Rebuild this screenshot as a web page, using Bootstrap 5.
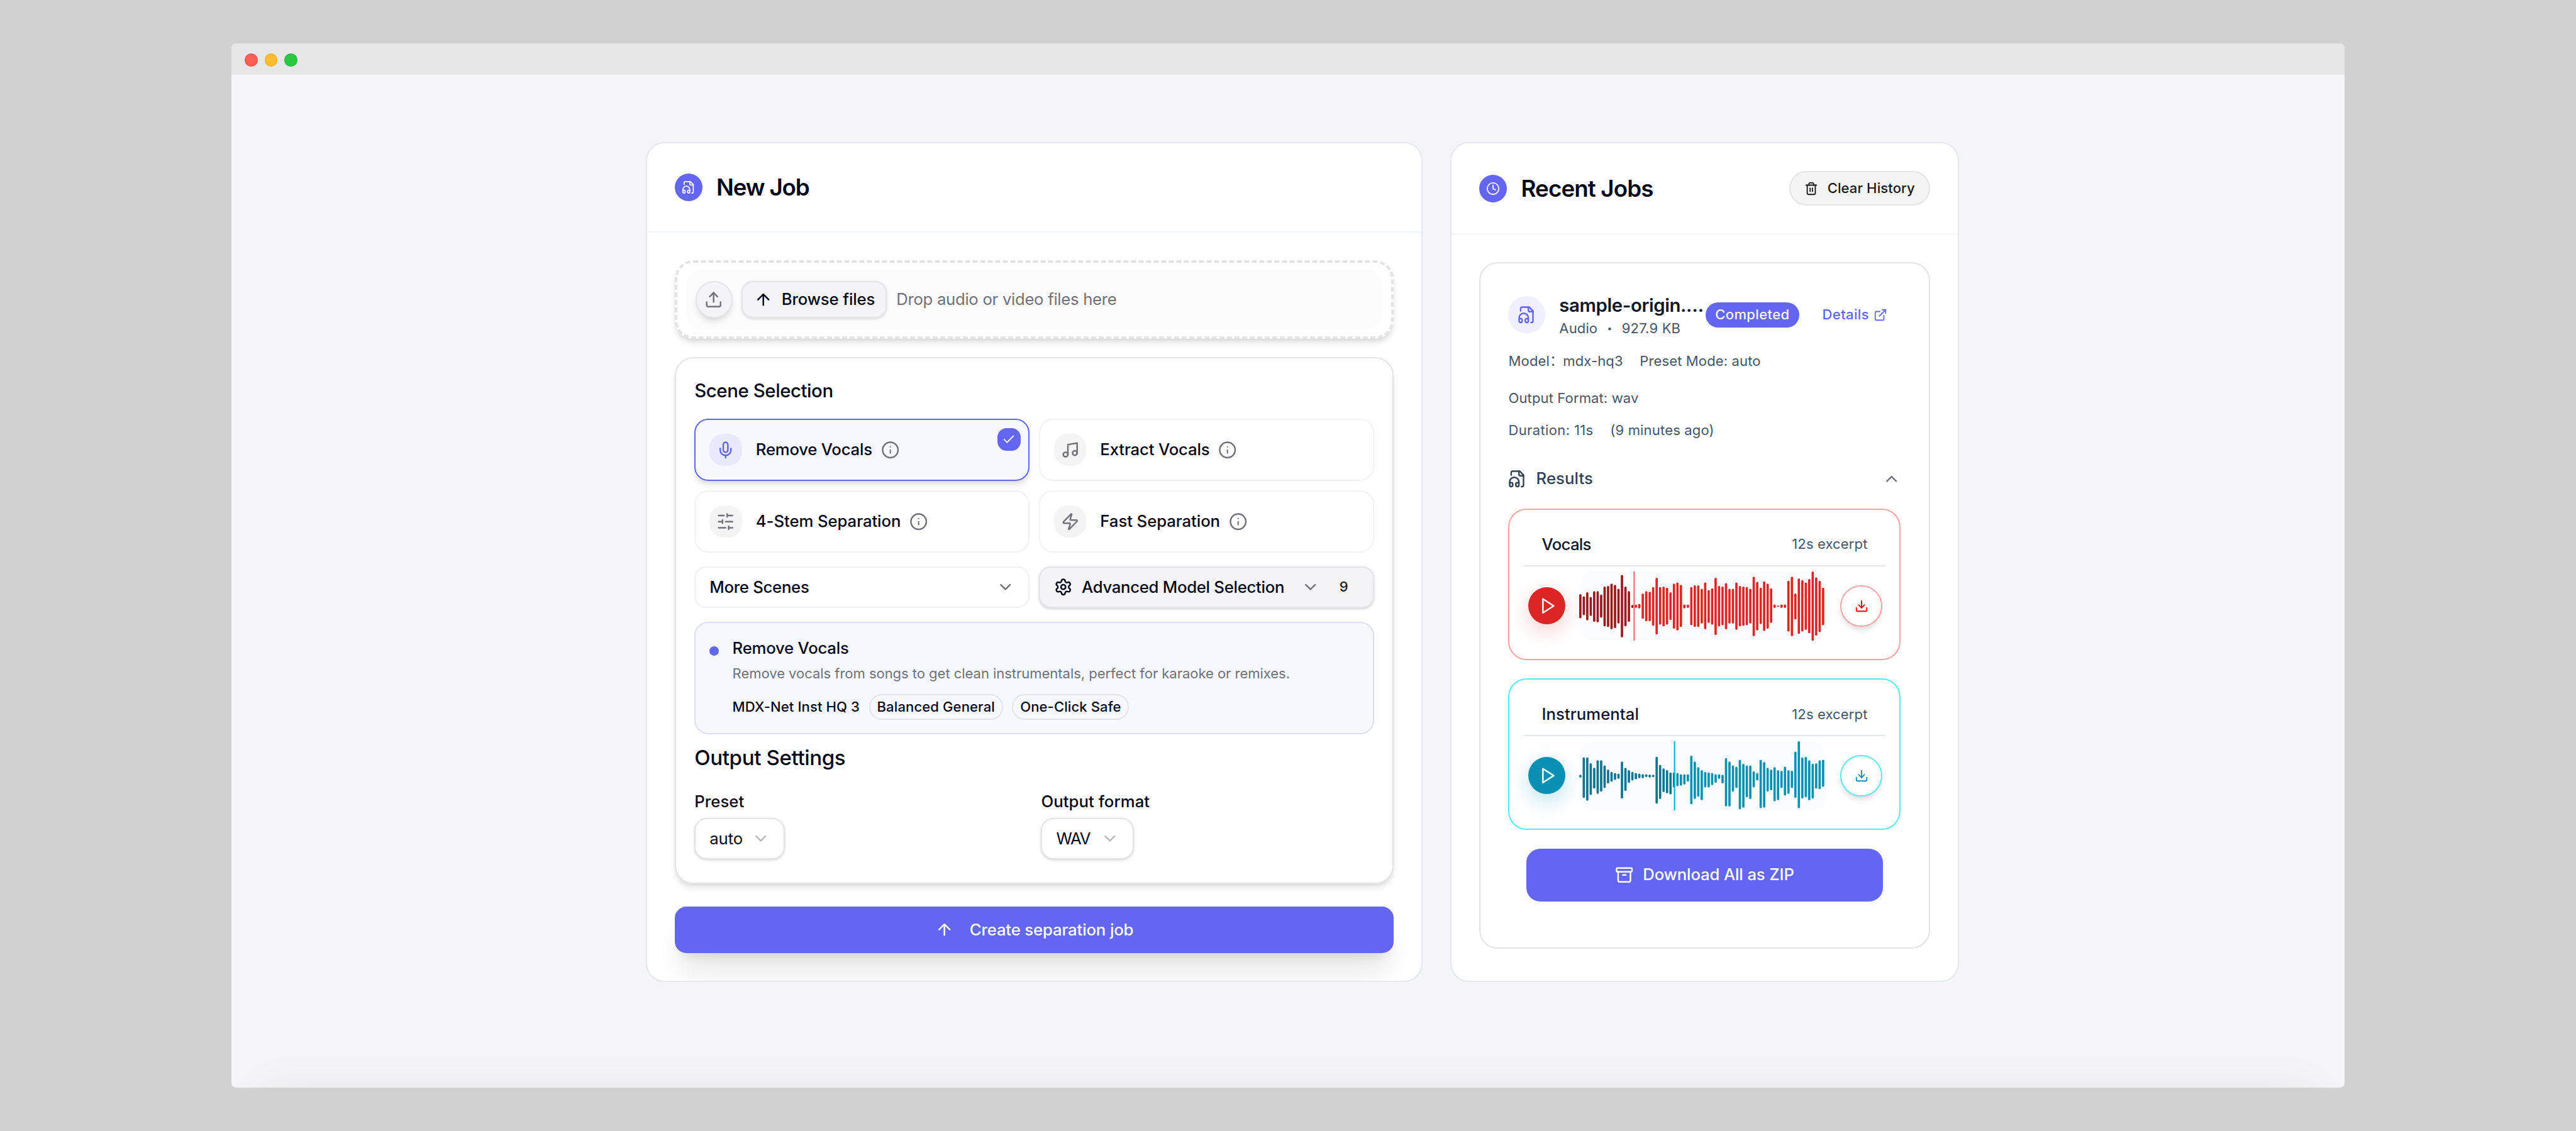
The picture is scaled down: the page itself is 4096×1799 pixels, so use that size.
<!DOCTYPE html>
<html lang="en">
<head>
<meta charset="utf-8">
<meta name="viewport" content="width=device-width, initial-scale=1">
<title>New Job</title>
<link href="https://cdn.jsdelivr.net/npm/bootstrap@5.3.0/dist/css/bootstrap.min.css" rel="stylesheet">
<style>
:root{--u:.91921px;--brand:#6366f1;--ink:#020617;--line:#e4e4e7;--muted:#71717a;--slate:#475569;--shadow-md:0 calc(8*var(--u)) calc(12*var(--u)) calc(-2*var(--u)) rgba(0,0,0,.1),0 calc(4*var(--u)) calc(8*var(--u)) calc(-4*var(--u)) rgba(0,0,0,.1)}
html{font-size:calc(32*var(--u))}
body{margin:0;background:#d1d1d1;color:var(--ink);font-family:Inter,"Noto Sans CJK SC",sans-serif;overflow:hidden;padding:calc(75*var(--u)) 0 0 calc(400*var(--u))}
svg.ico{fill:none;stroke:currentColor;stroke-width:2;stroke-linecap:round;stroke-linejoin:round;flex:none;width:calc(32*var(--u));height:calc(32*var(--u))}
svg.ico.s24{width:calc(24*var(--u));height:calc(24*var(--u))}
.t24{font-size:calc(24*var(--u));line-height:calc(32*var(--u));letter-spacing:.005em}
.t28{font-size:calc(28*var(--u));line-height:calc(40*var(--u));letter-spacing:-.006em}
.t32{font-size:calc(32*var(--u));line-height:calc(48*var(--u));letter-spacing:-.0145em}
.t36{font-size:calc(36*var(--u));line-height:calc(48*var(--u));letter-spacing:-.0119em}
.t40{font-size:calc(40*var(--u));line-height:calc(56*var(--u));letter-spacing:-.0245em}
.w5{font-weight:470}.w6{font-weight:570}
.ls-n32{letter-spacing:-.032em}.ls-n26{letter-spacing:-.0264em}.ls-n12{letter-spacing:-.0115em}.ls-n9{letter-spacing:-.009em}.ls-n3{letter-spacing:-.003em}
.ls-n1{letter-spacing:-.0022em}.ls-p2{letter-spacing:.002em}.ls-p10{letter-spacing:.007em}.ls-p16{letter-spacing:.016em}.ls-n50{letter-spacing:-.0497em}
.muted{color:var(--muted)}.slate{color:var(--slate)}.brand{color:var(--brand)}

.window{width:calc(3656*var(--u));height:calc(1807*var(--u));background:#f5f5f8;border-radius:calc(8*var(--u));overflow:hidden;position:relative}
.window::after{content:"";position:absolute;left:calc(50*var(--u));right:calc(50*var(--u));bottom:calc(-60*var(--u));height:calc(60*var(--u));box-shadow:0 0 calc(70*var(--u)) rgba(0,0,0,.065)}
.titlebar{height:calc(55*var(--u));background:#e7e7e7;padding:calc(3*var(--u)) 0 0 calc(23.5*var(--u));gap:calc(12*var(--u))}
.titlebar i{width:calc(22.4*var(--u));height:calc(22.4*var(--u));border-radius:50%;border:1px solid rgba(0,0,0,.08)}
.lt-r{background:#ff5f57}.lt-y{background:#febc2e}.lt-g{background:#28c840}

.board{padding:calc(116*var(--u)) 0 0 calc(717*var(--u));gap:calc(48*var(--u))}
.pane{border:2px solid #e2e8f0;border-radius:calc(32*var(--u));height:calc(1453*var(--u));background:#fff;overflow:hidden;flex:none;color:inherit}
.pane-job{width:calc(1344*var(--u))}.pane-recent{width:calc(879.5*var(--u))}
.pane>.card-header{background:#fff;border-bottom:2px solid #f1f5f9;padding:0 calc(48*var(--u));height:calc(154*var(--u));gap:calc(24*var(--u));flex:none}
.pane-recent>.card-header{height:calc(158*var(--u))}
.pane>.card-body{padding:calc(48*var(--u))}
.disc{width:calc(48*var(--u));height:calc(48*var(--u));background:var(--brand);color:#fff;border-radius:50%;flex:none}

.drop{height:calc(136*var(--u));border:4px dashed var(--line);border-radius:calc(32*var(--u));padding:calc(12*var(--u)) calc(16*var(--u));box-shadow:var(--shadow-md);background:#fff;margin-bottom:calc(32*var(--u))}
.drop-in{background:#fcfcfc;border-radius:calc(24*var(--u));padding:0 calc(15.5*var(--u));gap:calc(16*var(--u))}
.up{width:calc(64*var(--u));height:calc(64*var(--u));border:2px solid var(--line);border-radius:50%;background:#f4f4f7;color:var(--muted);box-shadow:var(--shadow-md);flex:none}
.btn{--bs-btn-border-width:0;padding:0;color:inherit}
.btn.browse{height:calc(64*var(--u));width:calc(251.5*var(--u));border:2px solid var(--line);border-radius:calc(20*var(--u));background:#f4f4f7;box-shadow:0 calc(2*var(--u)) calc(5*var(--u)) rgba(0,0,0,.12)}
.lift{box-shadow:0 calc(2*var(--u)) calc(6*var(--u)) rgba(0,0,0,.1),0 calc(2*var(--u)) calc(4*var(--u)) calc(-2*var(--u)) rgba(0,0,0,.1)}

.panel{height:calc(911*var(--u));border:2px solid var(--line);border-radius:calc(32*var(--u));padding:calc(32*var(--u));box-shadow:var(--shadow-md);margin-bottom:calc(40*var(--u))}
.panel-title{margin:0 0 calc(24*var(--u))}
.duo{display:grid;grid-template-columns:1fr 1fr;gap:calc(16*var(--u))}
.scene{height:calc(108*var(--u));border:2px solid #f2f2f3;border-radius:calc(24*var(--u));padding:0 calc(24*var(--u));position:relative}
.scene.on{border-color:var(--brand);background:#f7f8fe;box-shadow:var(--shadow-md)}
.tile{width:calc(56*var(--u));height:calc(56*var(--u));border-radius:calc(24*var(--u));background:#f4f4f4;color:var(--muted);margin-right:calc(24*var(--u));flex:none}
.on .tile{background:#e9e9fc;color:var(--brand)}
.scene .info{color:var(--muted);margin-left:calc(15*var(--u))}
.tick{position:absolute;top:calc(14*var(--u));right:calc(13.5*var(--u));width:calc(40*var(--u));height:calc(40*var(--u));border-radius:calc(16*var(--u));background:var(--brand);color:#fff}
.pick-row{margin:calc(24*var(--u)) 0}
.pick{height:calc(72*var(--u));border:2px solid #f0f0f1;border-radius:calc(20*var(--u));padding:0 calc(24*var(--u))}
.pick.adv{background:#f4f4f7;border-color:var(--line);gap:calc(16*var(--u))}
.count{width:calc(52*var(--u));height:calc(44*var(--u));border-radius:calc(22*var(--u));background:#f4f4f4;color:#18181b}
.note{height:calc(195*var(--u));border:2px solid #dcdcfb;background:#f7f8fe;border-radius:calc(24*var(--u));padding:calc(24*var(--u));gap:calc(23.5*var(--u))}
.note-desc{margin:calc(8*var(--u)) 0 calc(19*var(--u));white-space:nowrap}
.dot{width:calc(16*var(--u));height:calc(16*var(--u));border-radius:50%;background:var(--brand);margin-top:calc(16*var(--u));flex:none}
.chip{height:calc(44*var(--u));border:2px solid var(--line);border-radius:calc(22*var(--u));padding:0 calc(11.7*var(--u))}
.out-title{margin:calc(16*var(--u)) 0 calc(32*var(--u))}
.out-grid{gap:calc(24*var(--u))}
.out-label{margin-bottom:calc(8*var(--u))}
.opt{height:calc(72*var(--u));border:2px solid var(--line);border-radius:calc(22*var(--u));padding:0 calc(24*var(--u));gap:calc(15*var(--u));background:#fff}
.opt-wide{gap:calc(18*var(--u))}
.opt svg{color:var(--muted);opacity:.5}
.btn.cta{height:calc(80*var(--u));background:var(--brand);color:#fff;border-radius:calc(20*var(--u));gap:calc(28*var(--u));box-shadow:0 calc(40*var(--u)) calc(50*var(--u)) calc(-10*var(--u)) rgba(0,0,0,.1),0 calc(16*var(--u)) calc(20*var(--u)) calc(-12*var(--u)) rgba(0,0,0,.1)}

.btn.clear{width:calc(243*var(--u));height:calc(60*var(--u));border:2px solid var(--line);border-radius:calc(30*var(--u));background:#f4f4f4;color:#18181b;gap:calc(16*var(--u))}
.job{height:calc(1188*var(--u));border:2px solid var(--line);border-radius:calc(32*var(--u));padding:calc(48*var(--u))}
.job-top{height:calc(81*var(--u));margin-bottom:calc(24*var(--u))}
.avatar{width:calc(64*var(--u));height:calc(64*var(--u));border-radius:50%;background:#efeffd;color:var(--brand);margin-right:calc(24*var(--u));flex:none}
.fname{width:calc(253*var(--u));color:#0f172a;white-space:nowrap;flex:none}
.state{width:calc(162*var(--u));height:calc(44*var(--u));border-radius:calc(22*var(--u));background:var(--brand);color:#fafafa;margin-right:calc(40*var(--u));flex:none}
.details{gap:calc(8*var(--u))}
.bull{font-size:calc(15*var(--u));width:calc(10*var(--u));text-align:center}
.colon{display:inline-block;width:calc(23*var(--u));line-height:1;vertical-align:calc(2.5*var(--u));font-family:"Noto Sans CJK SC",sans-serif}
.facts{gap:calc(29*var(--u));height:calc(32*var(--u));align-items:flex-end;white-space:nowrap}
.row-out{margin:calc(32*var(--u)) 0 calc(24*var(--u))}
.results{height:calc(48*var(--u));margin:calc(43*var(--u)) 0 calc(28*var(--u));color:#334155;gap:calc(16*var(--u))}
.stem{height:calc(262*var(--u));border:2px solid;border-radius:calc(32*var(--u));padding:calc(24*var(--u)) calc(24*var(--u)) 0;margin-bottom:calc(32*var(--u))}
.stem-head{height:calc(74*var(--u));border-bottom:2px solid #e2e8f0;padding:0 calc(31.5*var(--u));margin-bottom:calc(8*var(--u));color:#0f172a}
.stem-row{padding:0 calc(8*var(--u));gap:calc(24*var(--u))}
.play{width:calc(64*var(--u));height:calc(64*var(--u));border-radius:50%;color:#fff;padding-left:calc(4*var(--u));flex:none}
.save{width:calc(72*var(--u));height:calc(72*var(--u));border:2px solid;border-radius:50%;background:#fff;flex:none;box-shadow:var(--shadow-md)}
.wave{width:calc(428.3*var(--u));height:calc(120*var(--u));border-radius:calc(24*var(--u));background:#fbfcfe;flex:none}
.wave svg{width:calc(428*var(--u));height:calc(120*var(--u));display:block}
.red,.red .save{border-color:#ffa2a2}.red .play{background:#dc2626;box-shadow:0 calc(12*var(--u)) calc(36*var(--u)) rgba(220,38,38,.22)}.red .save{color:#e7000b}
.cyan,.cyan .save{border-color:#53eafd}.cyan .play{background:#0891b2;box-shadow:0 calc(12*var(--u)) calc(36*var(--u)) rgba(8,145,178,.25)}.cyan .save{color:#0891b2}
.btn.zip{width:calc(616*var(--u));height:calc(92*var(--u));background:var(--brand);color:#fff;border-radius:calc(24*var(--u));gap:calc(16*var(--u));margin:0 auto}
</style>
<script src="https://cdn.jsdelivr.net/npm/bootstrap@5.3.0/dist/js/bootstrap.bundle.min.js"></script>
</head>
<body>
<svg width="0" height="0" class="d-none">
<symbol id="fileaudio" viewBox="0 0 24 24"><path d="M17.5 22h.5a2 2 0 0 0 2-2V7l-5-5H6a2 2 0 0 0-2 2v3"/><path d="M14 2v4a2 2 0 0 0 2 2h4"/><path d="M2 19a2 2 0 1 1 4 0v1a2 2 0 1 1-4 0v-4a6 6 0 0 1 12 0v4a2 2 0 1 1-4 0v-1a2 2 0 1 1 4 0"/></symbol>
<symbol id="upload" viewBox="0 0 24 24"><path d="M21 15v4a2 2 0 0 1-2 2H5a2 2 0 0 1-2-2v-4"/><path d="m17 8-5-5-5 5"/><path d="M12 3v12"/></symbol>
<symbol id="download" viewBox="0 0 24 24"><path d="M21 15v4a2 2 0 0 1-2 2H5a2 2 0 0 1-2-2v-4"/><path d="m7 10 5 5 5-5"/><path d="M12 15V3"/></symbol>
<symbol id="arrowup" viewBox="0 0 24 24"><path d="m5 12 7-7 7 7"/><path d="M12 19V5"/></symbol>
<symbol id="mic" viewBox="0 0 24 24"><path d="M12 2a3 3 0 0 0-3 3v7a3 3 0 0 0 6 0V5a3 3 0 0 0-3-3Z"/><path d="M19 10v2a7 7 0 0 1-14 0v-2"/><path d="M12 19v3"/></symbol>
<symbol id="info" viewBox="0 0 24 24"><circle cx="12" cy="12" r="10"/><path d="M12 16v-4" stroke-width="1.7"/><path d="M12 8h.01" stroke-width="1.9"/></symbol>
<symbol id="check" viewBox="0 0 24 24"><path d="M20 6 9 17l-5-5"/></symbol>
<symbol id="music" viewBox="0 0 24 24"><path d="M9 18V5l12-2v13"/><circle cx="6" cy="18" r="3"/><circle cx="18" cy="16" r="3"/></symbol>
<symbol id="sliders" viewBox="0 0 24 24"><path d="M21 4h-7M10 4H3M21 12h-9M8 12H3M21 20h-5M12 20H3M14 2v4M8 10v4M16 18v4"/></symbol>
<symbol id="zap" viewBox="0 0 24 24"><path d="M4 14a1 1 0 0 1-.78-1.63l9.9-10.2a.5.5 0 0 1 .86.46l-1.92 6.02A1 1 0 0 0 13 10h7a1 1 0 0 1 .78 1.63l-9.9 10.2a.5.5 0 0 1-.86-.46l1.92-6.02A1 1 0 0 0 11 14z"/></symbol>
<symbol id="down" viewBox="0 0 24 24"><path d="m6 9 6 6 6-6"/></symbol>
<symbol id="upch" viewBox="0 0 24 24"><path d="m18 15-6-6-6 6"/></symbol>
<symbol id="gear" viewBox="0 0 24 24"><path d="M9.671 4.136a2.34 2.34 0 0 1 4.659 0 2.34 2.34 0 0 0 3.319 1.915 2.34 2.34 0 0 1 2.33 4.033 2.34 2.34 0 0 0 0 3.831 2.34 2.34 0 0 1-2.33 4.033 2.34 2.34 0 0 0-3.319 1.915 2.34 2.34 0 0 1-4.659 0 2.34 2.34 0 0 0-3.32-1.915 2.34 2.34 0 0 1-2.33-4.033 2.34 2.34 0 0 0 0-3.831A2.34 2.34 0 0 1 6.35 6.051a2.34 2.34 0 0 0 3.319-1.915"/><circle cx="12" cy="12" r="3"/></symbol>
<symbol id="clock" viewBox="0 0 24 24"><circle cx="12" cy="12" r="10"/><path d="M12 6v6l4 2"/></symbol>
<symbol id="trash" viewBox="0 0 24 24"><path d="M3 6h18"/><path d="M19 6v14c0 1-1 2-2 2H7c-1 0-2-1-2-2V6"/><path d="M8 6V4c0-1 1-2 2-2h4c1 0 2 1 2 2v2"/><path d="M10 11v6M14 11v6"/></symbol>
<symbol id="ext" viewBox="0 0 24 24"><path d="M15 3h6v6"/><path d="M10 14 21 3"/><path d="M18 13v6a2 2 0 0 1-2 2H5a2 2 0 0 1-2-2V8a2 2 0 0 1 2-2h6"/></symbol>
<symbol id="playi" viewBox="0 0 24 24"><path d="m6 3 14 9-14 9z"/></symbol>
<symbol id="archive" viewBox="0 0 24 24"><rect width="20" height="5" x="2" y="3" rx="1"/><path d="M4 8v11a2 2 0 0 0 2 2h12a2 2 0 0 0 2-2V8"/><path d="M10 12h4"/></symbol>
</svg>

<div class="window">
  <div class="titlebar d-flex align-items-center"><i class="lt-r"></i><i class="lt-y"></i><i class="lt-g"></i></div>
  <div class="board d-flex">

    <section class="card pane pane-job">
      <div class="card-header d-flex align-items-center">
        <span class="disc d-flex align-items-center justify-content-center"><svg class="ico s24"><use href="#fileaudio"/></svg></span>
        <h1 class="t40 w6 ls-n32 m-0">New Job</h1>
      </div>
      <div class="card-body">
        <div class="drop d-flex">
          <div class="drop-in d-flex align-items-center flex-grow-1">
            <span class="up d-flex align-items-center justify-content-center"><svg class="ico"><use href="#upload"/></svg></span>
            <button class="btn browse t28 w5 d-flex align-items-center justify-content-center gap-2"><svg class="ico"><use href="#arrowup"/></svg>Browse files</button>
            <span class="t28 ls-n12 muted">Drop audio or video files here</span>
          </div>
        </div>

        <div class="panel">
          <h2 class="t32 w5 panel-title">Scene Selection</h2>
          <div class="duo">
            <div class="scene on d-flex align-items-center"><span class="tile d-flex align-items-center justify-content-center"><svg class="ico"><use href="#mic"/></svg></span><span class="t28 w5 ls-n9">Remove Vocals</span><svg class="ico info"><use href="#info"/></svg><span class="tick d-flex align-items-center justify-content-center"><svg class="ico s24"><use href="#check"/></svg></span></div>
            <div class="scene d-flex align-items-center"><span class="tile d-flex align-items-center justify-content-center"><svg class="ico"><use href="#music"/></svg></span><span class="t28 w5">Extract Vocals</span><svg class="ico info"><use href="#info"/></svg></div>
            <div class="scene d-flex align-items-center"><span class="tile d-flex align-items-center justify-content-center"><svg class="ico"><use href="#sliders"/></svg></span><span class="t28 w5 ls-n3">4-Stem Separation</span><svg class="ico info"><use href="#info"/></svg></div>
            <div class="scene d-flex align-items-center"><span class="tile d-flex align-items-center justify-content-center"><svg class="ico"><use href="#zap"/></svg></span><span class="t28 w5 ls-n3">Fast Separation</span><svg class="ico info"><use href="#info"/></svg></div>
          </div>
          <div class="duo pick-row">
            <div class="pick d-flex align-items-center justify-content-between"><span class="t28 w5 ls-n12">More Scenes</span><svg class="ico muted"><use href="#down"/></svg></div>
            <div class="pick adv lift d-flex align-items-center"><svg class="ico"><use href="#gear"/></svg><span class="t28 w5 ls-n12 me-auto">Advanced Model Selection</span><svg class="ico muted"><use href="#down"/></svg><span class="count t24 w5 d-flex align-items-center justify-content-center">9</span></div>
          </div>
          <div class="note d-flex">
            <span class="dot"></span>
            <div>
              <div class="t28 w5 ls-n9">Remove Vocals</div>
              <div class="t24 ls-n1 muted note-desc">Remove vocals from songs to get clean instrumentals, perfect for karaoke or remixes.</div>
              <div class="d-flex align-items-center gap-2 t24 w5">
                <span>MDX-Net Inst HQ 3</span><span class="chip d-flex align-items-center">Balanced General</span><span class="chip d-flex align-items-center">One-Click Safe</span>
              </div>
            </div>
          </div>
          <h2 class="t36 w5 out-title">Output Settings</h2>
          <div class="duo out-grid">
            <div>
              <div class="t28 w5 ls-p2 out-label">Preset</div>
              <div class="opt lift t28 d-inline-flex align-items-center"><span>auto</span><svg class="ico"><use href="#down"/></svg></div>
            </div>
            <div>
              <div class="t28 w5 ls-p2 out-label">Output format</div>
              <div class="opt opt-wide lift t28 d-inline-flex align-items-center"><span class="ls-n50">WAV</span><svg class="ico"><use href="#down"/></svg></div>
            </div>
          </div>
        </div>
        <button class="btn cta t28 w5 w-100 d-flex align-items-center justify-content-center"><svg class="ico"><use href="#arrowup"/></svg>Create separation job</button>
      </div>
    </section>

    <section class="card pane pane-recent">
      <div class="card-header d-flex align-items-center">
        <span class="disc d-flex align-items-center justify-content-center"><svg class="ico s24"><use href="#clock"/></svg></span>
        <h1 class="t40 w6 m-0 me-auto">Recent Jobs</h1>
        <button class="btn clear t24 w5 d-flex align-items-center justify-content-center"><svg class="ico s24"><use href="#trash"/></svg>Clear History</button>
      </div>
      <div class="card-body">
        <div class="job">
          <div class="job-top d-flex align-items-center">
            <span class="avatar d-flex align-items-center justify-content-center"><svg class="ico"><use href="#fileaudio"/></svg></span>
            <div class="fname">
              <div class="t32 w6">sample-origin.…</div>
              <div class="t24 slate d-flex gap-2"><span>Audio</span><span class="bull">•</span><span class="ls-p10">927.9 KB</span></div>
            </div>
            <span class="state t24 w5 ls-p16 d-flex align-items-center justify-content-center">Completed</span>
            <a href="#" class="details t24 w5 ls-p16 brand text-decoration-none d-flex align-items-center">Details<svg class="ico s24"><use href="#ext"/></svg></a>
          </div>
          <div class="facts t24 slate d-flex"><span class="d-flex"><span class="ls-p10">Model</span><span class="colon">：</span><span>mdx-hq3</span></span><span>Preset Mode: auto</span></div>
          <div class="t24 slate row-out">Output Format: wav</div>
          <div class="facts t24 slate d-flex"><span class="ls-p16">Duration: 11s</span><span class="ls-p10">(9 minutes ago)</span></div>
          <div class="results d-flex align-items-center">
            <svg class="ico"><use href="#fileaudio"/></svg><span class="t28 w5 ls-p2 me-auto">Results</span><svg class="ico muted"><use href="#upch"/></svg>
          </div>

          <div class="stem red">
            <div class="stem-head d-flex align-items-center justify-content-between"><span class="t28 w5 ls-n26">Vocals</span><span class="t24 slate">12s excerpt</span></div>
            <div class="stem-row d-flex align-items-center">
              <span class="play d-flex align-items-center justify-content-center"><svg class="ico"><use href="#playi"/></svg></span>
              <div class="wave" data-wave="vocals"></div>
              <span class="save d-flex align-items-center justify-content-center"><svg class="ico s24"><use href="#download"/></svg></span>
            </div>
          </div>
          <div class="stem cyan">
            <div class="stem-head d-flex align-items-center justify-content-between"><span class="t28 w5 ls-p2">Instrumental</span><span class="t24 slate">12s excerpt</span></div>
            <div class="stem-row d-flex align-items-center">
              <span class="play d-flex align-items-center justify-content-center"><svg class="ico"><use href="#playi"/></svg></span>
              <div class="wave" data-wave="instrumental"></div>
              <span class="save d-flex align-items-center justify-content-center"><svg class="ico s24"><use href="#download"/></svg></span>
            </div>
          </div>
          <button class="btn zip t28 w5 d-flex align-items-center justify-content-center"><svg class="ico"><use href="#archive"/></svg>Download All as ZIP</button>
        </div>
      </div>
    </section>
  </div>
</div>

<script>
// Each bar is top-bottom, in thirds of a track unit; the track is 120 units tall.
const waves = {
  vocals: {base: 24, played: 16, dark: '#991b1b', light: '#dc2626', head: 93.9, line: '#f87171', bars: '142-267 153-251 132-278 156-255 126-285 126-288 144-264 102-309 99-312 87-324 93-318 114-294 42-366 102-309 126-285 198-213 196-213 192-216 138-270 126-282 129-282 105-306 57-351 105-300 102-309 108-300 132-276 87-321 81-330 93-312 195-216 196-213 105-303 96-312 96-312 114-294 81-324 120-291 111-300 57-354 99-309 102-303 84-324 114-294 114-294 81-327 99-309 102-306 105-303 114-294 51-360 78-330 108-297 75-333 87-321 111-291 195-213 201-207 195-213 195-213 72-336 51-360 138-273 60-348 69-336 81-327 63-345 24-384 54-357 72-339 108-303'},
  instrumental: {base: 906, played: 27.5, dark: '#0e7490', light: '#0891b2', head: 163.8, line: '#06b6d4', bars: '1080-1095 990-1200 990-1215 1020-1185 1044-1152 1005-1179 1005-1167 1032-1149 1053-1125 1065-1116 1071-1107 1074-1101 1011-1203 1044-1164 1056-1122 1065-1110 1071-1104 1074-1098 1077-1098 1077-1092 1079-1095 1080-1092 987-1230 1029-1206 1047-1170 1056-1176 1068-1182 1068-1146 1071-1140 1077-1137 1077-1131 1077-1116 981-1233 1011-1206 1041-1194 1056-1212 1065-1146 1068-1146 1071-1134 1077-1122 1077-1101 1080-1125 993-1245 1011-1245 1032-1167 1038-1149 1002-1260 1023-1251 1032-1197 1032-1206 1062-1146 1071-1110 1002-1254 1014-1251 1044-1167 1053-1161 1041-1218 1056-1212 1059-1149 1038-1188 1056-1179 1059-1149 960-1200 906-1254 990-1203 987-1197 1005-1212 1023-1203 1020-1152 1005-1155 1002-1143'}
};
document.querySelectorAll('[data-wave]').forEach(el => {
  const w = waves[el.dataset.wave];
  const bars = w.bars.split(' ').map((s, i) => {
    const [a, b] = s.split('-').map(v => (v - w.base) / 3);
    return `<rect x="${i * 6}" y="${a.toFixed(1)}" width="4" height="${(b - a).toFixed(1)}" rx="2" ry="${Math.min(2, (b - a) / 2)}" fill="${i < w.played ? w.dark : w.light}"/>`;
  }).join('');
  el.innerHTML = `<svg viewBox="0 0 428 120">${bars}<rect x="${w.head}" y="0" width="2.4" height="120" fill="${w.line}"/></svg>`;
});
</script>
</body>
</html>
